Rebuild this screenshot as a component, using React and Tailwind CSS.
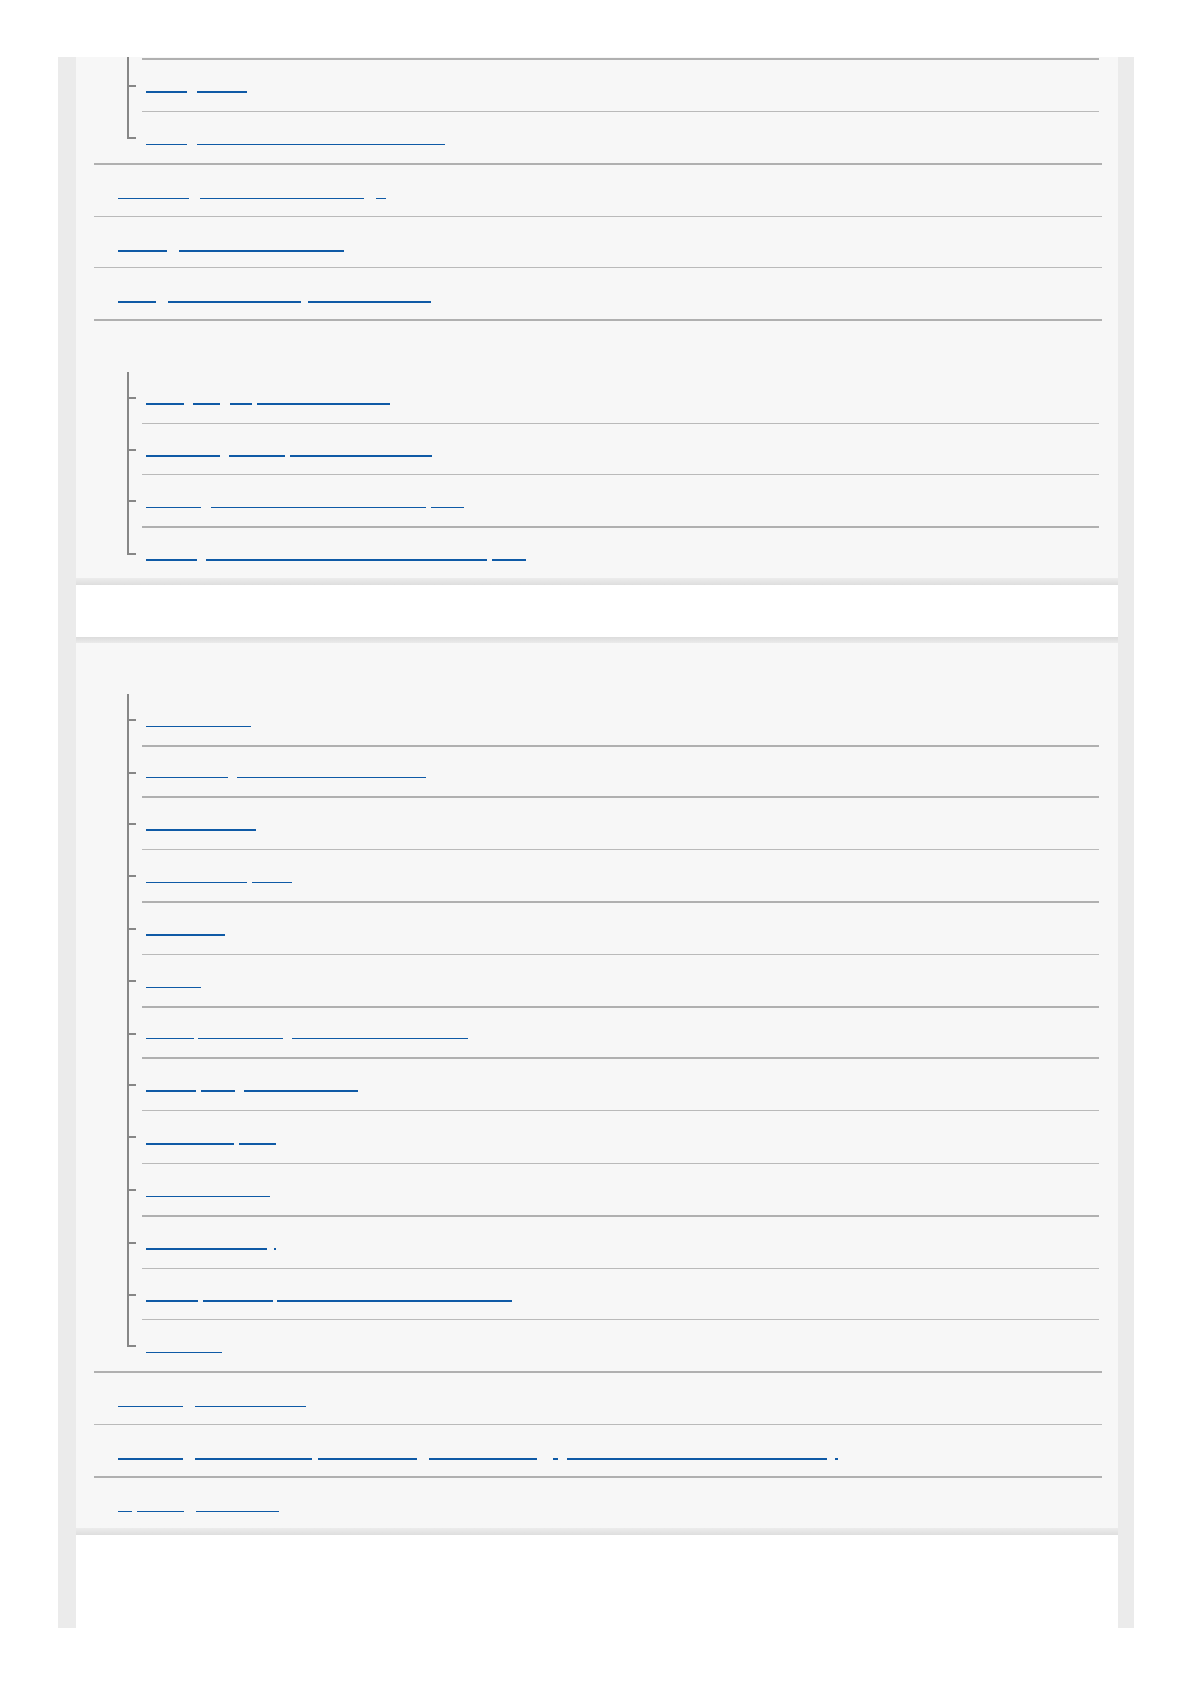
import React from "react";

const BLUE = "bg-[#0f5aa6]";

function Underline({ segs, base, thick }) {
  let prev = base;
  return (
    <div className="flex items-start">
      {segs.map(([s, e], i) => {
        const ml = s - prev;
        prev = e;
        return (
          <span
            key={i}
            className={`block shrink-0 ${thick ? "h-[2px]" : "h-[1px]"} ${BLUE}`}
            style={{ width: e - s, marginLeft: ml }}
          />
        );
      })}
    </div>
  );
}

const borderCls = {
  thick: "border-b-2 border-[#b0b0b0]",
  thin: "border-b border-[#bababa]",
  none: "",
};

function NItem({ segs, thick, border, h, pt, last, noTick }) {
  return (
    <div className="flex">
      <div className="w-[9px] shrink-0 flex flex-col">
        {noTick ? (
          <div className="flex-1 border-l-2 border-[#878787]" />
        ) : (
          <>
            <div className="h-[27px] border-l-2 border-b-2 border-[#878787]" />
            {!last && <div className="flex-1 border-l-2 border-[#878787]" />}
          </>
        )}
      </div>
      <div className={`flex-1 ml-[6px] mr-[3px] ${borderCls[border]}`}>
        <div className={`${h} ${pt} pl-[4px]`}>
          {segs && <Underline segs={segs} base={146} thick={thick} />}
        </div>
      </div>
    </div>
  );
}

function TItem({ segs, thick, border, h, pt }) {
  return (
    <div className={borderCls[border]}>
      <div className={`${h} ${pt} pl-[24px]`}>
        <Underline segs={segs} base={118} thick={thick} />
      </div>
    </div>
  );
}

function NestedList({ items }) {
  return (
    <div className="pl-[33px]">
      {items.map((it, i) => (
        <NItem key={i} {...it} last={i === items.length - 1} />
      ))}
    </div>
  );
}

const listA0 = [
  { noTick: true, border: "thick", h: "h-[1px]", pt: "pt-0" },
  { segs: [[146, 187], [197, 247]], thick: true, border: "thin", h: "h-[51px]", pt: "pt-[31px]" },
  { segs: [[146, 187], [197, 445]], thick: false, border: "none", h: "h-[51px]", pt: "pt-[32px]" },
];

const listA1 = [
  { segs: [[146, 184], [193, 220], [230, 252], [257, 390]], thick: true, border: "thin", h: "h-[51px]", pt: "pt-[31px]" },
  { segs: [[146, 220], [229, 285], [290, 432]], thick: true, border: "thin", h: "h-[50px]", pt: "pt-[31px]" },
  { segs: [[146, 201], [211, 426], [431, 464]], thick: false, border: "thick", h: "h-[51px]", pt: "pt-[32px]" },
  { segs: [[146, 197], [206, 487], [492, 526]], thick: true, border: "none", h: "h-[50px]", pt: "pt-[31px]" },
];

const listC = [
  { segs: [[146, 251]], thick: false, border: "thick", h: "h-[51px]", pt: "pt-[32px]" },
  { segs: [[146, 228], [237, 426]], thick: false, border: "thick", h: "h-[49px]", pt: "pt-[30px]" },
  { segs: [[146, 256]], thick: true, border: "thin", h: "h-[51px]", pt: "pt-[31px]" },
  { segs: [[146, 247], [252, 292]], thick: false, border: "thick", h: "h-[51px]", pt: "pt-[32px]" },
  { segs: [[146, 225]], thick: true, border: "thin", h: "h-[51px]", pt: "pt-[31px]" },
  { segs: [[146, 201]], thick: false, border: "thick", h: "h-[51px]", pt: "pt-[32px]" },
  { segs: [[146, 194], [198, 283], [292, 468]], thick: false, border: "thick", h: "h-[49px]", pt: "pt-[30px]" },
  { segs: [[146, 196], [201, 235], [244, 358]], thick: true, border: "thin", h: "h-[51px]", pt: "pt-[31px]" },
  { segs: [[146, 234], [239, 276]], thick: true, border: "thin", h: "h-[52px]", pt: "pt-[32px]" },
  { segs: [[146, 270]], thick: false, border: "thick", h: "h-[51px]", pt: "pt-[32px]" },
  { segs: [[146, 267], [274, 276]], thick: true, border: "thin", h: "h-[51px]", pt: "pt-[31px]" },
  { segs: [[146, 198], [203, 273], [277, 512]], thick: true, border: "thin", h: "h-[50px]", pt: "pt-[31px]" },
  { segs: [[146, 222]], thick: false, border: "none", h: "h-[51px]", pt: "pt-[32px]" },
];

export default function App() {
  return (
    <div
      className="w-[1190px] h-[1684px] bg-white pt-[57px]"
      style={{ fontFamily: '"Noto Sans", "Liberation Sans", sans-serif' }}
    >
      <div className="ml-[58px] w-[1076px] bg-[#ebebeb] pl-[18px] pr-[16px]">
        {/* Panel A */}
        <div className="bg-[#f7f7f7] pl-[18px] pr-[16px]">
          <div className={borderCls.thick}>
            <NestedList items={listA0} />
          </div>
          <TItem segs={[[118, 189], [200, 364], [376, 386]]} thick={false} border="thin" h="h-[51px]" pt="pt-[33px]" />
          <TItem segs={[[118, 167], [179, 344]]} thick border="thin" h="h-[50px]" pt="pt-[33px]" />
          <TItem segs={[[118, 156], [168, 301], [308, 431]]} thick border="thick" h="h-[51px]" pt="pt-[33px]" />
          <div>
            <div className="h-[51px]" />
            <NestedList items={listA1} />
          </div>
        </div>
        <div className="h-[7px] bg-linear-to-b from-[#ececec] to-[#dedede]" />
        <div className="h-[52px] bg-white" />
        <div className="h-[6px] bg-linear-to-b from-[#dcdcdc] to-[#ebebeb]" />

        {/* Panel C */}
        <div className="bg-[#f7f7f7] pl-[18px] pr-[16px]">
          <div className={borderCls.thick}>
            <div className="h-[51px]" />
            <NestedList items={listC} />
          </div>
          <TItem segs={[[118, 183], [195, 306]]} thick={false} border="thin" h="h-[51px]" pt="pt-[33px]" />
          <TItem
            segs={[[118, 183], [195, 312], [318, 417], [429, 537], [553, 558], [567, 827], [835, 838]]}
            thick
            border="thick"
            h="h-[51px]"
            pt="pt-[33px]"
          />
          <TItem segs={[[118, 132], [137, 184], [196, 279]]} thick={false} border="none" h="h-[50px]" pt="pt-[33px]" />
        </div>
        <div className="h-[7px] bg-linear-to-b from-[#ececec] to-[#dedede]" />
        <div className="h-[93px] bg-white" />
      </div>
    </div>
  );
}
